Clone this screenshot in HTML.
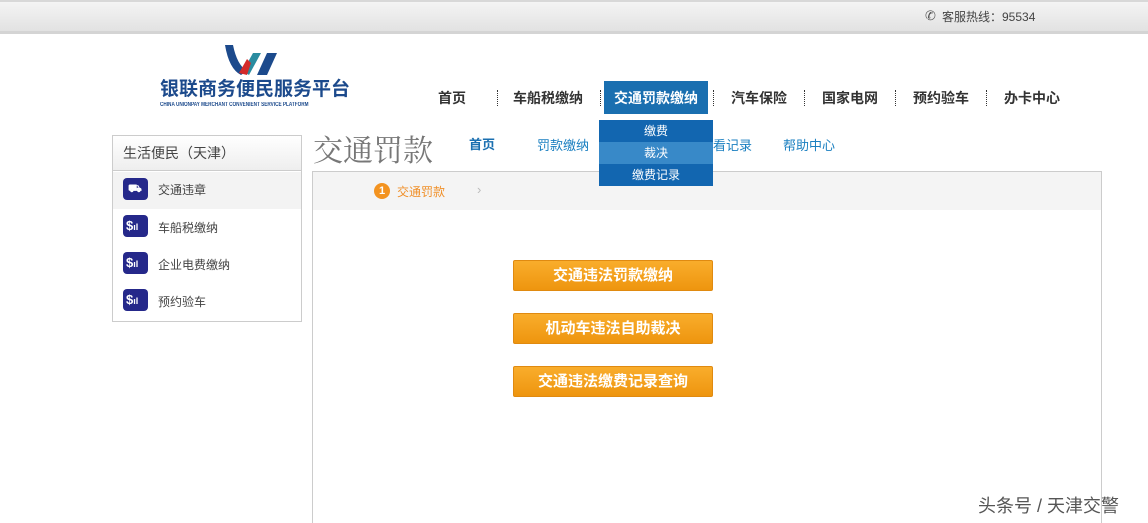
<!DOCTYPE html>
<html><head><meta charset="utf-8"><style>
*{margin:0;padding:0;box-sizing:border-box}
html,body{width:1148px;height:523px;overflow:hidden}
body{background:#fff;font-family:"Liberation Sans","Noto Sans CJK SC",sans-serif;position:relative;color:#333}
.a{position:absolute}
.top{left:0;top:0;width:1148px;height:34px;background:linear-gradient(#f4f4f4,#e2e2e2);border-top:2px solid #d8d8d8;border-bottom:3px solid #d4d4d4}
.nav{font-size:14px;font-weight:bold;color:#333;top:88px}
.sep{top:90px;width:0;height:16px;border-left:1px dotted #333}
.btn{left:513px;width:200px;height:31px;background:linear-gradient(#f9ad2c,#ee950f);border:1px solid #e08a10;border-radius:2px;color:#fff;font-size:15px;font-weight:bold;text-align:center;line-height:29px}
.si{left:123px;width:25px;height:22px;background:#25288a;border-radius:4px;color:#fff;font-size:13px;font-weight:bold;line-height:22px;padding-left:3px}
.st{left:158px;font-size:12px;color:#444}
.dd{left:599px;width:114px;height:22px;background:#1266b0;color:#fff;font-size:12px;text-align:center;line-height:22px}
</style></head><body>
<div class="a top"></div>
<div class="a" style="left:925px;top:8px;font-size:13px;color:#555">✆</div>
<div class="a" style="left:942px;top:8px;font-size:12px;color:#444">客服热线：95534</div>

<svg class="a" style="left:225px;top:45px" width="60" height="32" viewBox="0 0 60 32">
<path d="M0 0 L8 0 Q12 20 22 26 L16 30 Q4 24 0 0Z" fill="#1c4a8c"/>
<path d="M18 26 L28 8 L36 8 L24 30Z" fill="#2a8ca0"/>
<path d="M14 28 L22 14 L26 18 L22 30Z" fill="#d32a2a"/>
<path d="M32 30 L42 8 L52 8 L42 30Z" fill="#1c4a8c"/>
</svg>
<div class="a" style="left:160px;top:79px;font-size:19px;font-weight:bold;color:#1c4a8c;line-height:22px;white-space:nowrap">银联商务便民服务平台</div>
<div class="a" style="left:160px;top:102px;font-size:6px;font-weight:bold;color:#1c4a8c;white-space:nowrap;transform:scaleX(0.78);transform-origin:left">CHINA UNIONPAY MERCHANT CONVENIENT SERVICE PLATFORM</div>

<div class="a nav" style="left:438px">首页</div>
<div class="a sep" style="left:497px"></div>
<div class="a nav" style="left:513px">车船税缴纳</div>
<div class="a sep" style="left:600px"></div>
<div class="a" style="left:604px;top:81px;width:104px;height:33px;background:#1a6fb0"></div>
<div class="a nav" style="left:614px;color:#fff">交通罚款缴纳</div>
<div class="a sep" style="left:713px"></div>
<div class="a nav" style="left:731px">汽车保险</div>
<div class="a sep" style="left:804px"></div>
<div class="a nav" style="left:822px">国家电网</div>
<div class="a sep" style="left:895px"></div>
<div class="a nav" style="left:913px">预约验车</div>
<div class="a sep" style="left:986px"></div>
<div class="a nav" style="left:1004px">办卡中心</div>

<div class="a" style="left:112px;top:135px;width:190px;height:187px;border:1px solid #ccc"></div>
<div class="a" style="left:113px;top:136px;width:188px;height:35px;background:linear-gradient(#fff,#eee);border-bottom:1px solid #ccc;font-size:14px;color:#444;line-height:34px;padding-left:10px">生活便民（天津）</div>
<div class="a" style="left:113px;top:172px;width:188px;height:37px;background:#f3f3f3"></div>
<div class="a si" style="top:178px;font-size:11px;padding-left:5px">⛟</div><div class="a st" style="top:181px">交通违章</div>
<div class="a si" style="top:215px">$<span style="font-size:9px">ıl</span></div><div class="a st" style="top:219px">车船税缴纳</div>
<div class="a si" style="top:252px">$<span style="font-size:9px">ıl</span></div><div class="a st" style="top:256px">企业电费缴纳</div>
<div class="a si" style="top:289px">$<span style="font-size:9px">ıl</span></div><div class="a st" style="top:293px">预约验车</div>

<div class="a" style="left:313px;top:130px;font-size:30px;color:#777;font-family:'Noto Serif CJK SC',serif;line-height:36px">交通罚款</div>
<div class="a" style="left:469px;top:134px;font-size:13px;font-weight:bold;color:#1a6fb0">首页</div>
<div class="a" style="left:537px;top:135px;font-size:13px;color:#1a7fc0">罚款缴纳</div>
<div class="a" style="left:700px;top:135px;font-size:13px;color:#1a7fc0">查看记录</div>
<div class="a" style="left:783px;top:135px;font-size:13px;color:#1a7fc0">帮助中心</div>

<div class="a" style="left:312px;top:171px;width:790px;height:352px;border:1px solid #ccc;border-bottom:none"></div>
<div class="a" style="left:313px;top:172px;width:788px;height:38px;background:#f4f4f4"></div>
<div class="a" style="left:374px;top:183px;width:16px;height:16px;border-radius:50%;background:#f39320;color:#fff;font-size:11px;font-weight:bold;text-align:center;line-height:16px">1</div>
<div class="a" style="left:397px;top:183px;font-size:12px;color:#f0902a">交通罚款</div>
<div class="a" style="left:477px;top:182px;font-size:13px;color:#bbb">›</div>

<div class="a dd" style="top:120px">缴费</div>
<div class="a dd" style="top:142px;background:#3889c8">裁决</div>
<div class="a dd" style="top:164px">缴费记录</div>

<div class="a btn" style="top:260px">交通违法罚款缴纳</div>
<div class="a btn" style="top:313px">机动车违法自助裁决</div>
<div class="a btn" style="top:366px">交通违法缴费记录查询</div>

<div class="a" style="left:978px;top:494px;font-size:18px;line-height:24px;color:#555">头条号 / 天津交警</div>
</body></html>
